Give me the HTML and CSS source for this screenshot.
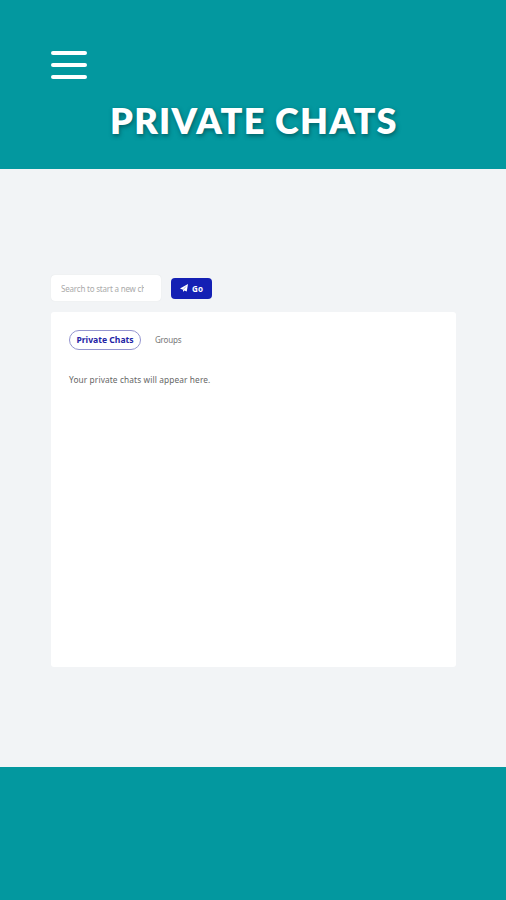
FILE: index.html
```html
<!DOCTYPE html>
<html lang="en">
<head>
<meta charset="utf-8">
<title>Private Chats</title>
<link rel="stylesheet" href="styles.css">
</head>
<body>
<header class="header">
  <button class="menu" aria-label="Menu"><span class="bar"></span><span class="bar"></span><span class="bar"></span></button>
  <h1 class="title">PRIVATE CHATS</h1>
</header>
<main class="main">
  <form class="search">
    <input class="field" type="text" placeholder="Search to start a new chat">
    <button class="go" type="button">
      <svg class="plane" viewBox="0 0 16 16"><path d="M16 0 13.500 15 8.500 12.800 6 16V11.500L0 9.200Z" fill="#fff"/><path d="M6 11.500 12 5" stroke="#1420b4" stroke-width=".7"/></svg>
      <span>Go</span>
    </button>
  </form>
  <section class="card">
    <nav class="tabs">
      <a class="tab active">Private Chats</a>
      <a class="tab">Groups</a>
    </nav>
    <p class="empty">Your private chats will appear here.</p>
  </section>
</main>
<footer class="footer"></footer>
</body>
</html>
```
FILE: styles.css
```css
* { box-sizing: border-box; }
body {
  margin: 0;
  height: 900px;
  display: flex;
  flex-direction: column;
  background: #f2f4f6;
  font-family: "Noto Sans", sans-serif;
}
button { border: 0; padding: 0; background: none; font: inherit; }
.header {
  height: 169px;
  padding: 51px 51px 0;
  background: #03989f;
}
.menu {
  display: flex;
  flex-direction: column;
  gap: 8px;
  width: 36px;
}
.bar { height: 4px; border-radius: 2px; background: #fff; }
.title {
  margin: 18px 0 0 59px;
  font: 800 36px/46px Lato, sans-serif;
  letter-spacing: 1.25px;
  color: #fff;
  white-space: nowrap;
  text-shadow: 1px 2px 4px rgba(0, 50, 55, .55);
}
.main { height: 598px; padding: 106px 50px 0 51px; }
.search { display: flex; align-items: center; gap: 10px; margin: 0; }
.field {
  width: 110px;
  height: 26px;
  padding: 1px 17px 0 10px;
  border: 0;
  border-radius: 4px;
  background: #fff;
  box-shadow: 0 0 1px #d9dbde;
  font: 8px "Noto Sans", sans-serif;
  letter-spacing: -.2px;
}
.field::placeholder { color: #aaa; }
.go {
  display: flex;
  align-items: center;
  justify-content: center;
  gap: 4px;
  width: 41px;
  height: 21px;
  border-radius: 4px;
  background: #1420b4;
  color: #fff;
  font-size: 8px;
  font-weight: 700;
}
.plane { width: 8px; height: 8px; }
.card {
  height: 355px;
  margin-top: 11px;
  padding: 18px;
  border-radius: 3px;
  background: #fff;
}
.tabs { display: flex; align-items: center; gap: 14px; }
.tab { font-size: 8px; line-height: 20px; letter-spacing: -.2px; color: #777; }
.active {
  width: 72px;
  height: 20px;
  border: 1px solid #9495cf;
  border-radius: 10px;
  line-height: 18px;
  letter-spacing: 0;
  text-align: center;
  white-space: nowrap;
  font-size: 8.600px;
  font-weight: 700;
  color: #2424a5;
}
.empty { margin: 24px 0 0; font-size: 8.300px; line-height: 12px; letter-spacing: .12px; color: #666; }
.footer { height: 133px; background: #03989f; }
```
